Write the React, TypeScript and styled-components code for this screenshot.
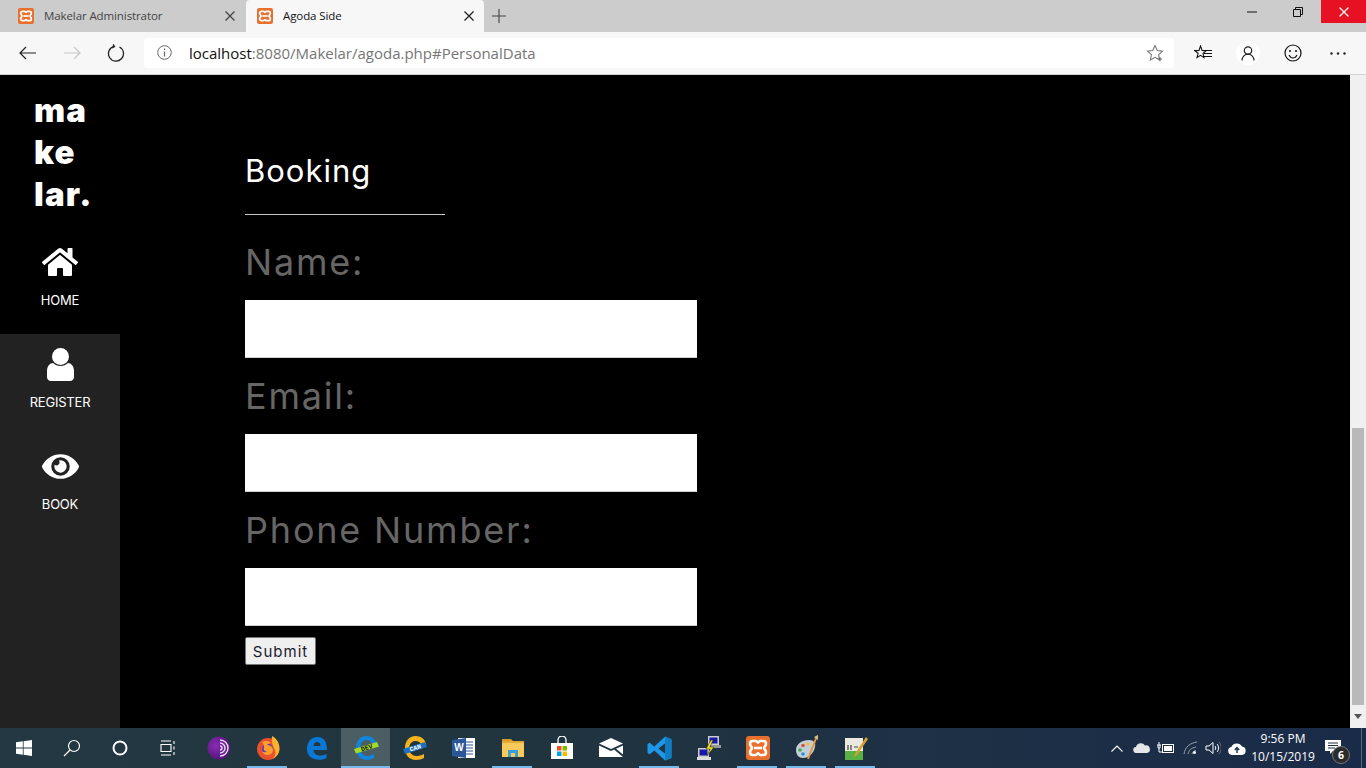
import React from "react";
import styled, { createGlobalStyle } from "styled-components";
import { FaHome, FaEye } from "react-icons/fa";

const Global = createGlobalStyle`
  html, body { margin: 0; padding: 0; height: 100%; overflow: hidden; background: #000; }
  #root { height: 100%; }
`;

const Page = styled.div`
  width: 1366px; height: 768px; display: flex; flex-direction: column; overflow: hidden;
  font-family: Inter, "Liberation Sans", sans-serif;
`;
const TabStrip = styled.div`
  height: 32px; background: #cccccc; display: flex; align-items: stretch; flex: none;
`;
const Tab = styled.div<{ $active?: boolean }>`
  width: ${p => (p.$active ? 238 : 246)}px; display: flex; align-items: center; box-sizing: border-box;
  padding: 0 ${p => (p.$active ? 10 : 11)}px 0 ${p => (p.$active ? 11 : 18)}px;
  background: ${p => (p.$active ? "#f7f7f7" : "transparent")};
  border-radius: ${p => (p.$active ? "4px 4px 0 0" : "0")};
  color: ${p => (p.$active ? "#111" : "#444")};
  font: 11.5px "Open Sans", sans-serif; letter-spacing: -.1px;
`;
const TabTitle = styled.span`
  flex: 1; margin-left: 10px; white-space: nowrap; padding-bottom: 1px;
`;
const NewTab = styled.div`
  width: 30px; display: flex; align-items: center; justify-content: center;
`;
const Drag = styled.div`flex: 1;`;
const WinBtn = styled.div<{ $close?: boolean }>`
  width: ${p => (p.$close ? 45 : 46)}px; height: 23px;
  background: ${p => (p.$close ? "#e81123" : "transparent")};
  display: flex; align-items: center; justify-content: center;
`;
const Toolbar = styled.div`
  height: 42px; flex: none; background: #f7f7f7; border-bottom: 1px solid #d2d2d2;
  display: flex; align-items: center; box-sizing: content-box;
`;
const NavBtn = styled.div`
  width: 44px; height: 42px; display: flex; align-items: center; justify-content: center;
`;
const NavGroup = styled.div`
  display: flex; margin-left: 6px; margin-right: 6px; width: 132px;
`;
const Address = styled.div`
  width: 1030px; height: 30px; background: #fff; border-radius: 3px; display: flex; align-items: center;
  padding: 0 10px 0 13px; box-sizing: border-box; margin-top: -1px; flex: none;
`;
const Url = styled.div`
  flex: 1; margin-left: 17px; font: 15px "Open Sans", sans-serif; color: #767676; white-space: nowrap;
  b { font-weight: 400; color: #111; }
`;
const ToolIcons = styled.div`
  display: flex; margin-left: 6px; width: 186px;
`;
const ToolBtn = styled.div`
  width: 45px; height: 42px; display: flex; align-items: center; justify-content: center;
`;
const ProfileCircle = styled.div`
  width: 24px; height: 24px; border-radius: 50%; background: #fff; display: flex; align-items: center; justify-content: center;
`;
const Viewport = styled.div`
  flex: 1; display: flex; min-height: 0; background: #000;
`;
const Sidebar = styled.nav`
  width: 120px; flex: none; display: flex; flex-direction: column; background: #000;
`;
const Logo = styled.div`
  height: 157px; box-sizing: border-box; padding: 14px 0 0 34px; color: #fff;
  font: 900 33px/42px Inter, "Liberation Sans", sans-serif; letter-spacing: 1.2px;
`;
const NavItem = styled.div<{ $dark?: boolean }>`
  height: 102px; display: flex; flex-direction: column; align-items: center; color: #fff; box-sizing: border-box;
  padding-top: 14px;
  background: ${p => (p.$dark ? "#222" : "transparent")};
`;
const NavIcon = styled.div`
  height: 32px; display: flex; align-items: center; justify-content: center; font-size: 32px;
`;
const NavLabel = styled.div`
  margin-top: 14px; font-size: 13px; line-height: 16px; letter-spacing: -.2px;
`;
const DarkFill = styled.div`flex: 1; background: #222;`;
const Main = styled.main`
  flex: 1; padding: 74px 0 0 125px; color: #fff; box-sizing: border-box;
`;
const Heading = styled.h1`
  margin: 0; font-weight: 400; font-size: 31px; line-height: 44px; color: #fff; letter-spacing: 1px;
`;
const Rule = styled.hr`
  width: 200px; margin: 21px 0 9px; border: 0; border-top: 1px solid #c8c8c8;
`;
const Field = styled.label`
  display: block; color: #666; font-size: 36px; line-height: 44px; padding: 16px 0; letter-spacing: 1.8px;
`;
const Input = styled.input`
  display: block; width: 452px; height: 58px; flex: none; box-sizing: border-box; border: 0; border-bottom: 1px solid #cfcfcf; background: #fff; padding: 0; margin: 0;
`;
const FieldBlock = styled.div`
  height: 134px; display: flex; flex-direction: column;
`;
const Submit = styled.button`
  display: block; margin-top: 11px; width: 71px; height: 28px; background: #efefef; border: 1px solid #767676; border-radius: 2px;
  font: 15px Inter, sans-serif; letter-spacing: 1px; color: #1a1a2e; padding: 0;
`;
const Scrollbar = styled.div`
  width: 16px; flex: none; background: #f0f0f0; display: flex; flex-direction: column;
`;
const ScrollTrack = styled.div`
  flex: 1; display: flex; flex-direction: column; justify-content: flex-end; padding: 0 1px;
`;
const Thumb = styled.div`
  height: 277px; background: #b9b9b9; margin: 0 1px;
`;
const ScrollArrow = styled.div`
  height: 23px; display: flex; align-items: center; justify-content: center;
`;
const Taskbar = styled.div`
  height: 40px; flex: none; display: flex; align-items: stretch;
  background: linear-gradient(90deg, #233842 0%, #21353f 35%, #1d3045 70%, #1a2b49 100%);
`;
const StartSlot = styled.div`
  width: 48px; display: flex; align-items: center; justify-content: center;
`;
const AppRow = styled.div`
  display: flex; margin-left: 2px;
`;
const AppSlot = styled.div<{ $open?: boolean; $active?: boolean }>`
  width: 49px; display: flex; align-items: center; justify-content: center; position: relative;
  background: ${p => (p.$active ? "#4b5e64" : "transparent")};
  ${p => p.$open && `&::after { content: ""; position: absolute; bottom: 0; left: ${p.$active ? 0 : 4}px; right: ${p.$active ? 0 : 5}px; height: 2px; background: #76b9ed; }`}
`;
const Tray = styled.div`
  margin-left: auto; display: flex; align-items: center; color: #fff;
`;
const TrayIcon = styled.div<{ $w: number }>`
  width: ${p => p.$w}px; display: flex; align-items: center; justify-content: center;
`;
const Clock = styled.div`
  width: 60px; text-align: center; white-space: nowrap; font: 12px/18px "Open Sans", sans-serif; color: #fff;
  display: flex; flex-direction: column; align-items: center;
`;
const Notify = styled.div`
  width: 42px; align-self: stretch; position: relative; display: flex; align-items: center; padding: 0 0 2px 6px; box-sizing: border-box; margin-left: 6px;
`;
const Badge = styled.div`
  position: absolute; left: 13px; top: 18px; width: 16px; height: 16px; border-radius: 50%; background: #2b2b2b; border: 1px solid #777;
  color: #fff; font: 700 10.5px/16px "Open Sans", sans-serif; text-align: center;
`;
const DesktopPeek = styled.div`
  width: 5px; align-self: stretch; border-left: 1px solid #55677a; box-sizing: border-box;
`;

const Xampp = ({ s = 16 }: { s?: number }) => (
  <svg width={s} height={s} viewBox="0 0 24 24">
    <rect x="0" y="0" width="24" height="24" rx="3" fill="#e8702c" />
    <path d="M6.500 5h3.200c1.300 0 1.600 1.600 2.300 1.600S13 5 14.300 5h3.200C19.300 5 20 6.300 20 8c0 1.800-2 2.700-2 4s2 2.200 2 4c0 1.700-.7 3-2.500 3h-3.200c-1.300 0-1.600-1.600-2.300-1.600S11 19 9.700 19H6.500C4.700 19 4 17.700 4 16c0-1.800 2-2.700 2-4S4 9.800 4 8c0-1.700.7-3 2.500-3z" fill="none" stroke="#fff" strokeWidth="2.600" />
    <path d="M8 12h8" stroke="#fff" strokeWidth="2.600" />
  </svg>
);
const X = ({ c = "#333", s = 10, w = 1.3 }: { c?: string; s?: number; w?: number }) => (
  <svg width={s} height={s} viewBox="0 0 10 10"><path d="M.5.5l9 9M9.500.5l-9 9" stroke={c} strokeWidth={w} fill="none" /></svg>
);
const Line = ({ children, w = 20, h = 20 }: { children: React.ReactNode; w?: number; h?: number }) => (
  <svg width={w} height={h} viewBox={`0 0 ${w} ${h}`} fill="none">{children}</svg>
);

const apps: { key: string; open?: boolean; active?: boolean; icon: React.ReactNode }[] = [
  { key: "tor", icon: (
    <Line w={24} h={24}>
      <defs><radialGradient id="tg" cx=".35" cy=".4" r=".7"><stop offset="0" stopColor="#8a2bb5" /><stop offset="1" stopColor="#4c1470" /></radialGradient></defs>
      <circle cx="12" cy="12" r="11.500" fill="url(#tg)" />
      <path d="M13 4a8 8 0 0 1 0 16M13 7a5 5 0 0 1 0 10M13 10a2 2 0 0 1 0 4" stroke="#e9d5f2" strokeWidth="1.500" />
    </Line>) },
  { key: "firefox", open: true, icon: (
    <Line w={24} h={24}>
      <circle cx="12" cy="13" r="11" fill="#e8512c" />
      <path d="M16 0c6 3 8 9 7.500 14-.5 4-3 7-7 9 3-3 3.500-6 2.500-9-.5-2-4-5-3-14z" fill="#fbb32f" />
      <circle cx="11.500" cy="13" r="5.500" fill="#5a3dbd" />
      <path d="M6 6c3-2 8-1 9 1-2 0-3 1-4 2 2 0 6 1 6 5 0 3-3 5-6 5-2 0-4-1.500-5-3.500 1 1 4 1 5 0-2 0-4-2-3-4 0-1 0-3-2-5.500z" fill="#ffa02e" />
    </Line>) },
  { key: "edge", icon: (
    <svg width="22" height="24" viewBox="0 0 22 24"><path d="M1 13C1 6 5 1 11.500 1 18 1 21 6 21 14H7.500c.3 4 3.500 5.500 7 5.500 2 0 4-.5 6-1.500v4c-2 1.200-4.500 1.800-7 1.800C6 23.800 1 20 1 13zm6.500-3h7c0-2.500-1.300-4-3.300-4S8 7.500 7.500 10z" fill="#0a78d4" /></svg>
  ) },
  { key: "edgedev", open: true, active: true, icon: (
    <svg width="32" height="26" viewBox="0 0 32 26">
      <path d="M6 13C6 6 10 1 16.500 1 22 1 25 4 26 8h-4c-1-2-3-3-5.500-3-3 0-5.500 2-6 5-.3 1-.5 2-.5 3 0 5 4 8 7 8 2.500 0 4.500-.5 7-2v4c-2 1.200-4.500 2-7 2C10 25 6 20 6 13z" fill="#1086dc" />
      <path d="M4 14l23-7 2 4.500-23 7z" fill="#a2d92b" />
      <text x="16.500" y="15" fontSize="6.500" fontWeight="700" fontFamily="'Liberation Mono', monospace" textAnchor="middle" fill="#111" transform="rotate(-17 16 12)">DEV</text>
    </svg>) },
  { key: "edgecan", icon: (
    <svg width="32" height="26" viewBox="0 0 32 26">
      <path d="M6 13C6 6 10 1 16.500 1 22 1 26 4 27 9h-5c-1-2-3-3-5.500-3-3 0-5.500 2-6 5-.3 1-.5 2-.5 2 0 5 4 8 7 8 2.500 0 5-.5 8-2v4c-2 1.200-5 2-8 2C10 25 6 20 6 13z" fill="#f5b21c" />
      <path d="M4 14l22-7 2 5-22 7z" fill="#1c6fc4" />
      <text x="16" y="15" fontSize="6.500" fontWeight="700" fontFamily="'Liberation Mono', monospace" textAnchor="middle" fill="#fff" transform="rotate(-16 16 12)">CAN</text>
    </svg>) },
  { key: "word", icon: (
    <svg width="24" height="24" viewBox="0 0 24 24">
      <rect x="6" y="2" width="17" height="20" fill="#fff" />
      <path d="M13 6h8M13 9h8M13 12h8M13 15h8M13 18h8" stroke="#2b579a" strokeWidth="1.200" />
      <path d="M0 4l14-2v20L0 20z" fill="#2b579a" />
      <text x="7" y="15" fontSize="10" fontWeight="700" fontFamily="'Liberation Sans', sans-serif" textAnchor="middle" fill="#fff">W</text>
    </svg>) },
  { key: "folder", open: true, icon: (
    <svg width="24" height="20" viewBox="0 0 24 20">
      <path d="M1 1h9l2 2H1z" fill="#d99b28" />
      <rect x="1" y="3" width="22" height="16" fill="#f6cb5b" />
      <rect x="1" y="3" width="22" height="2" fill="#e2ab36" />
      <rect x="7" y="12" width="10" height="7" fill="#3a9fd8" />
      <rect x="10" y="15" width="4" height="4" fill="#f6cb5b" />
    </svg>) },
  { key: "store", icon: (
    <svg width="24" height="24" viewBox="0 0 24 24">
      <path d="M8 7V4a4 4 0 0 1 8 0v3" stroke="#fff" strokeWidth="1.300" fill="none" />
      <path d="M1 7h22v16H1z" fill="#fff" />
      <rect x="7" y="10" width="4.500" height="4.500" fill="#f25022" />
      <rect x="12.500" y="10" width="4.500" height="4.500" fill="#7fba00" />
      <rect x="7" y="15.500" width="4.500" height="4.500" fill="#00a4ef" />
      <rect x="12.500" y="15.500" width="4.500" height="4.500" fill="#ffb900" />
    </svg>) },
  { key: "mail", icon: (
    <svg width="24" height="20" viewBox="0 0 24 20">
      <path d="M0 5.500L12 0l12 5.500-12 5.500z" fill="#fff" />
      <path d="M0 7.500l12 5.500 3-1.400L24 19H0zM24 7.500V16.500l-7-5.800z" fill="#fff" />
    </svg>) },
  { key: "vscode", open: true, icon: (
    <svg width="25" height="25" viewBox="0 0 24 24">
      <path d="M17.500.5L23.500 3v18l-6 2.500L7 14l-4.500 3.500L.5 16.300V7.700L2.500 6.500 7 10 17.500.5zM17.500 7L11 12l6.500 5z" fill="#1e97e8" />
      <path d="M17.500.5L23.500 3v18l-6 2.500z" fill="#0f7cc4" />
    </svg>) },
  { key: "putty", icon: (
    <svg width="24" height="26" viewBox="0 0 24 26">
      <rect x="11" y="1" width="11" height="9" fill="#ccc" /><rect x="12.500" y="2.500" width="8" height="6" fill="#1818a8" />
      <rect x="14" y="10" width="10" height="3" fill="#999" />
      <rect x="1" y="13" width="11" height="9" fill="#ccc" /><rect x="2.500" y="14.500" width="8" height="6" fill="#1818a8" />
      <rect x="0" y="22" width="14" height="3" fill="#ddd" />
      <path d="M14 5l-5 9h4l-3 7 7-9h-4l3-7z" fill="#f5e01c" stroke="#222" strokeWidth=".5" />
    </svg>) },
  { key: "xampp", open: true, icon: <Xampp s={24} /> },
  { key: "paint", open: true, icon: (
    <svg width="24" height="26" viewBox="0 0 24 26">
      <path d="M1 15c0-6 6-10 13-10 5 0 7 3 6 7-1 6-6 11-12 11-4 0-7-3-7-8z" fill="#c2ced8" />
      <circle cx="5" cy="15" r="1.800" fill="#3fae49" /><circle cx="8" cy="10.500" r="1.800" fill="#e24b3b" /><circle cx="13" cy="9" r="1.800" fill="#f5c02c" /><circle cx="8" cy="19" r="1.800" fill="#2d8fd5" />
      <path d="M22 1L13 24" stroke="#e8963c" strokeWidth="2" />
      <path d="M19 2l4-2v5z" fill="#d9b98a" />
    </svg>) },
  { key: "notepad", open: true, icon: (
    <svg width="24" height="25" viewBox="0 0 24 25">
      <rect x="1" y="2" width="18" height="22" fill="#e9e9e0" />
      <rect x="1" y="15" width="18" height="9" fill="#5bb044" />
      <path d="M4 9v5M7 9v5M10 11h4" stroke="#444" strokeWidth="1.200" />
      <path d="M22 1L11 18l-1 3 3-2L24 3z" fill="#d9a02b" />
    </svg>) },
];

const User = () => (
  <svg width="27" height="33" viewBox="0 0 27 33">
    <circle cx="13.500" cy="8.500" r="8.500" fill="#fff" />
    <path d="M0 29v-6c0-5 3-8 6-8 2 2 4.500 3 7.500 3s5.500-1 7.500-3c3 0 6 3 6 8v6c0 2-1.500 4-4 4H4c-2.500 0-4-2-4-4z" fill="#fff" />
  </svg>
);

export default function App() {
  return (
    <Page>
      <Global />
      <TabStrip>
        <Tab><Xampp /><TabTitle>Makelar Administrator</TabTitle><X c="#444" /></Tab>
        <Tab $active><Xampp /><TabTitle>Agoda Side</TabTitle><X c="#222" /></Tab>
        <NewTab>
          <Line w={14} h={14}><path d="M7 0v14M0 7h14" stroke="#444" strokeWidth="1.100" /></Line>
        </NewTab>
        <Drag />
        <WinBtn><Line w={10} h={2}><path d="M0 1h10" stroke="#111" /></Line></WinBtn>
        <WinBtn>
          <Line w={10} h={10}><path d="M.5 2.500h7v7h-7zM2.500 2.500V.5h7v7h-2" stroke="#111" /></Line>
        </WinBtn>
        <WinBtn $close><X c="#fff" s={10} w={1.200} /></WinBtn>
      </TabStrip>
      <Toolbar>
        <NavGroup>
          <NavBtn><Line w={18} h={14}><path d="M17 7H1M7 1L1 7l6 6" stroke="#222" strokeWidth="1.200" /></Line></NavBtn>
          <NavBtn><Line w={18} h={14}><path d="M1 7h16M11 1l6 6-6 6" stroke="#c9c9c9" strokeWidth="1.200" /></Line></NavBtn>
          <NavBtn><Line w={18} h={18}><path d="M7 2.400A7.500 7.500 0 1 0 12.500 3M6 .5l1.500 2L5 4" stroke="#222" strokeWidth="1.300" /></Line></NavBtn>
        </NavGroup>
        <Address>
          <Line w={15} h={15}>
            <circle cx="7.500" cy="7.500" r="6.800" stroke="#666" strokeWidth="1" />
            <path d="M7.500 6.500v5M7.500 3.500V5" stroke="#666" strokeWidth="1.200" />
          </Line>
          <Url><b>localhost</b>:8080/Makelar/agoda.php#PersonalData</Url>
          <Line w={18} h={18}>
            <path d="M9 1.500l2.300 5 5.200.6-3.900 3.600 1 5.300L9 13.300 4.400 16l1-5.300L1.500 7.100l5.200-.6z" stroke="#777" strokeWidth="1.100" />
            <path d="M14 13v4M12 15h4" stroke="#666" strokeWidth="1" />
          </Line>
        </Address>
        <ToolIcons>
          <ToolBtn>
            <Line w={18} h={16}>
              <path d="M6.500 1l1.600 4.400 4.400.2-3.500 2.700 1 4.300-3.500-2.300L3 12.600l1.100-4.300L.8 5.600l4.200-.2z" stroke="#111" strokeWidth="1.100" fill="none" />
              <path d="M10 5.500h8M10 8.500h8M10 11.500h8" stroke="#111" strokeWidth="1" />
            </Line>
          </ToolBtn>
          <ToolBtn>
            <ProfileCircle>
              <Line w={14} h={15}>
                <circle cx="7" cy="4.500" r="3.700" stroke="#222" strokeWidth="1.200" />
                <path d="M1 14.500c0-4 3-6.300 6-6.300s6 2.300 6 6.300" stroke="#222" strokeWidth="1.200" />
              </Line>
            </ProfileCircle>
          </ToolBtn>
          <ToolBtn>
            <Line w={18} h={18}>
              <circle cx="9" cy="9" r="8" stroke="#111" strokeWidth="1.200" />
              <circle cx="6" cy="7" r="1" fill="#111" /><circle cx="12" cy="7" r="1" fill="#111" />
              <path d="M5 11c1 2 2.500 3 4 3s3-1 4-3" stroke="#111" strokeWidth="1.100" />
            </Line>
          </ToolBtn>
          <ToolBtn>
            <Line w={16} h={3}><circle cx="1.500" cy="1.500" r="1.200" fill="#222" /><circle cx="8" cy="1.500" r="1.200" fill="#222" /><circle cx="14.500" cy="1.500" r="1.200" fill="#222" /></Line>
          </ToolBtn>
        </ToolIcons>
      </Toolbar>
      <Viewport>
        <Sidebar>
          <Logo>ma<br />ke<br />lar.</Logo>
          <NavItem><NavIcon><FaHome size={36} /></NavIcon><NavLabel>HOME</NavLabel></NavItem>
          <NavItem $dark><NavIcon><User /></NavIcon><NavLabel>REGISTER</NavLabel></NavItem>
          <NavItem $dark><NavIcon><FaEye size={37} /></NavIcon><NavLabel>BOOK</NavLabel></NavItem>
          <DarkFill />
        </Sidebar>
        <Main>
          <Heading>Booking</Heading>
          <Rule />
          <FieldBlock><Field>Name:</Field><Input /></FieldBlock>
          <FieldBlock><Field>Email:</Field><Input /></FieldBlock>
          <FieldBlock><Field>Phone Number:</Field><Input /></FieldBlock>
          <Submit>Submit</Submit>
        </Main>
        <Scrollbar>
          <ScrollTrack><Thumb /></ScrollTrack>
          <ScrollArrow>
            <Line w={8} h={5}><path d="M0 0h8L4 5z" fill="#555" /></Line>
          </ScrollArrow>
        </Scrollbar>
      </Viewport>
      <Taskbar>
        <StartSlot>
          <svg width="16" height="16" viewBox="0 0 16 16"><path d="M0 2.300l6.800-1v6.300H0zM7.600 1.200L16 0v7.600H7.600zM0 8.400h6.800v6.300L0 13.700zM7.600 8.400H16V16l-8.400-1.200z" fill="#fff" /></svg>
        </StartSlot>
        <StartSlot>
          <Line w={18} h={18}><circle cx="11" cy="7" r="5.500" stroke="#fff" strokeWidth="1.200" /><path d="M7 11l-6 6" stroke="#fff" strokeWidth="1.300" /></Line>
        </StartSlot>
        <StartSlot>
          <Line w={16} h={16}><circle cx="8" cy="8" r="6.500" stroke="#fff" strokeWidth="2" /></Line>
        </StartSlot>
        <StartSlot>
          <Line w={17} h={16}>
            <path d="M1 4.500h10v7H1zM1 1h10M1 15h10M14 1v3M14 6.500v3M14 12v3" stroke="#fff" strokeWidth="1.100" />
          </Line>
        </StartSlot>
        <AppRow>
          {apps.map(a => (
            <AppSlot key={a.key} $open={a.open} $active={a.active}>{a.icon}</AppSlot>
          ))}
        </AppRow>
        <Tray>
          <TrayIcon $w={24}><Line w={12} h={7}><path d="M.5 6.500L6 1l5.500 5.500" stroke="#fff" strokeWidth="1.100" /></Line></TrayIcon>
          <TrayIcon $w={24}>
            <svg width="17" height="10" viewBox="0 0 17 10"><path d="M3.500 10a3 3 0 0 1-.5-6 5 5 0 0 1 9-1.500 3.800 3.800 0 0 1 2 7.500z" fill="#e6e6e6" /></svg>
          </TrayIcon>
          <TrayIcon $w={24}>
            <Line w={17} h={12}>
              <rect x="5.500" y="2.500" width="11" height="8" stroke="#fff" />
              <rect x="7" y="4" width="8" height="5" fill="#fff" />
              <path d="M0 3h4M2 0v3M1 3v3h2V3M2 6v4h3" stroke="#fff" />
            </Line>
          </TrayIcon>
          <TrayIcon $w={28}>
            <Line w={16} h={14}>
              <path d="M1 13C2 6 7 2 14 1M5 13c1-4 3-6 8-7M9 13c.5-2 1.500-3 4-3.500" stroke="#98a4ad" strokeWidth="1" />
              <circle cx="11.500" cy="11.500" r="1.500" fill="#fff" />
            </Line>
          </TrayIcon>
          <TrayIcon $w={16}>
            <Line w={16} h={14}>
              <path d="M1 5h3l4-3.500v11L4 9H1z" stroke="#fff" strokeWidth="1" />
              <path d="M10 5c1 1 1 3 0 4M12 3c2 2 2 6 0 8" stroke="#fff" strokeWidth="1" />
              <path d="M14 1c3 3 3 9 0 12" stroke="#777" strokeWidth="1" />
            </Line>
          </TrayIcon>
          <TrayIcon $w={32}>
            <svg width="18" height="13" viewBox="0 0 18 13">
              <path d="M4 13a4 4 0 0 1-.7-7.900A6 6 0 0 1 14 4.500a4.300 4.300 0 0 1 0 8.500z" fill="#fff" />
              <path d="M9 11V6M6.800 8L9 5.500 11.200 8" stroke="#1d3045" strokeWidth="1.400" fill="none" />
            </svg>
          </TrayIcon>
          <Clock><span>9:56 PM</span><span>10/15/2019</span></Clock>
          <Notify>
            <svg width="16" height="15" viewBox="0 0 16 15"><path d="M0 0h16v11H8l-3 3v-3H0z" fill="#fff" /><path d="M3 3h10M3 5.500h10M3 8h7" stroke="#1d3045" /></svg>
            <Badge>6</Badge>
          </Notify>
          <DesktopPeek />
        </Tray>
      </Taskbar>
    </Page>
  );
}
